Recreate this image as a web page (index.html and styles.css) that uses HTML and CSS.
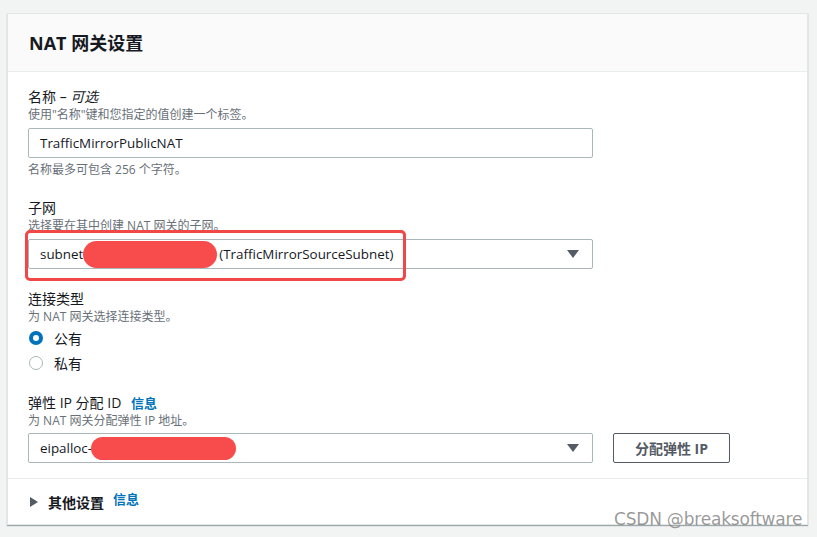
FILE: index.html
```html
<!DOCTYPE html>
<html lang="zh">
<head>
<meta charset="utf-8">
<link rel="stylesheet" href="styles.css">
</head>
<body>
<div class="page">
  <section class="card">
    <header class="card-header"><h2>NAT 网关设置</h2></header>
    <div class="card-body">
      <div class="field">
        <div class="label">名称 – <i>可选</i></div>
        <div class="desc">使用"名称"键和您指定的值创建一个标签。</div>
        <div class="input">TrafficMirrorPublicNAT</div>
        <div class="constraint">名称最多可包含 256 个字符。</div>
      </div>
      <div class="field">
        <div class="label">子网</div>
        <div class="desc">选择要在其中创建 NAT 网关的子网。</div>
        <div class="select-wrap">
          <div class="select">
            <span>subnet</span><span class="blot blot-subnet"></span><span>(TrafficMirrorSourceSubnet)</span>
            <span class="caret"></span>
          </div>
          <div class="highlight"></div>
        </div>
      </div>
      <div class="field short">
        <div class="label">连接类型</div>
        <div class="desc">为 NAT 网关选择连接类型。</div>
        <div class="radios">
          <div class="radio-row"><span class="radio on"></span><span>公有</span></div>
          <div class="radio-row"><span class="radio"></span><span>私有</span></div>
        </div>
      </div>
      <div class="field last">
        <div class="label">弹性 IP 分配 ID <a class="info">信息</a></div>
        <div class="desc">为 NAT 网关分配弹性 IP 地址。</div>
        <div class="eip-row">
          <div class="select">
            <span>eipalloc-</span><span class="blot blot-eip"></span>
            <span class="caret"></span>
          </div>
          <button class="btn">分配弹性 IP</button>
        </div>
      </div>
    </div>
    <footer class="card-footer">
      <span class="tri"></span><span class="more">其他设置</span><a class="info up">信息</a>
    </footer>
  </section>
  <div class="watermark">CSDN @breaksoftware</div>
</div>
</body>
</html>
```
FILE: styles.css
```css
* { box-sizing: border-box; }
html, body { margin: 0; padding: 0; }
body {
  background: #f2f3f3;
  font-family: "Open Sans", "Noto Sans CJK SC", sans-serif;
  color: #16191f;
  width: 817px;
  height: 537px;
  overflow: hidden;
}
.page { position: relative; width: 817px; height: 537px; padding: 13px 0 0 7px; }
.card {
  width: 801px;
  background: #fff;
  border: 1px solid #e3e6e6;
  box-shadow: 0 1px 1px rgba(0, 28, 36, 0.35);
}
.card-header {
  height: 58px;
  background: #fafafa;
  border-bottom: 1px solid #eaeded;
  display: flex;
  align-items: center;
  padding-left: 21px;
}
.card-header h2 {
  margin: 0;
  font-size: 18px;
  font-weight: 700;
  line-height: 22px;
  color: #16191f;
}
.card-body { padding: 15px 20px 0 20px; }
.field { margin-bottom: 20px; }
.field.short { margin-bottom: 18px; }
.field.last { margin-bottom: 0; }
.label { font-size: 14px; line-height: 20px; color: #16191f; }
.label i { font-style: italic; }
.desc { font-size: 12px; line-height: 16px; color: #687078; }
.constraint { font-size: 12px; line-height: 16px; color: #687078; margin-top: 4px; }
.input, .select {
  height: 30px;
  width: 565px;
  border: 1px solid #aab7b8;
  border-radius: 2px;
  margin-top: 5px;
  font-size: 13.4px;
  line-height: 28px;
  padding-left: 11px;
  color: #16191f;
  display: flex;
  align-items: center;
  position: relative;
}
.select-wrap { position: relative; }
.blot {
  display: inline-block;
  height: 27px;
  background: #f84b4b;
  border-radius: 14px;
}
.blot-subnet { width: 134px; margin-right: 2px; }
.blot-eip { width: 145px; height: 23px; border-radius: 12px; margin-left: -1px; }
.caret {
  position: absolute;
  right: 13px;
  top: 10px;
  width: 0; height: 0;
  border-left: 6px solid transparent;
  border-right: 6px solid transparent;
  border-top: 8px solid #545b64;
}
.highlight {
  position: absolute;
  left: -3px;
  top: -9px;
  width: 381px;
  height: 51px;
  border: 3px solid #f24747;
  border-radius: 5px;
}
.radios { margin-top: 0; }
.radio-row {
  height: 25px;
  display: flex;
  align-items: center;
  font-size: 14px;
}
.radio {
  width: 14px; height: 14px;
  border-radius: 50%;
  border: 1.5px solid #aab7b8;
  margin-left: 1px;
  margin-right: 11px;
}
.radio.on { border: 4px solid #0073bb; }
.info { color: #0073bb; font-weight: 700; font-size: 13px; margin-left: 6px; }
.eip-row { display: flex; align-items: flex-start; }
.eip-row .select { margin-top: 4px; }
.btn {
  margin-top: 4px;
  margin-left: 20px;
  width: 117px;
  height: 30px;
  border: 1px solid #545b64;
  border-radius: 2px;
  background: #fff;
  font-family: "Open Sans", "Noto Sans CJK SC", sans-serif;
  font-weight: 700;
  font-size: 14px;
  color: #545b64;
  padding: 0;
}
.card-footer {
  margin-top: 15px;
  border-top: 1px solid #eaeded;
  height: 46px;
  display: flex;
  align-items: center;
  padding-left: 22px;
  font-size: 14px;
}
.tri {
  width: 0; height: 0;
  border-top: 5px solid transparent;
  border-bottom: 5px solid transparent;
  border-left: 8px solid #545b64;
  margin-right: 10px;
}
.more { font-weight: 700; color: #16191f; }
.info.up { position: relative; top: -3px; margin-left: 9px; }
.watermark {
  position: absolute;
  left: 614px;
  top: 509px;
  font-family: "DejaVu Sans", sans-serif;
  font-size: 17px;
  color: rgba(120, 120, 120, 0.75);
  letter-spacing: -0.2px;
}
```
